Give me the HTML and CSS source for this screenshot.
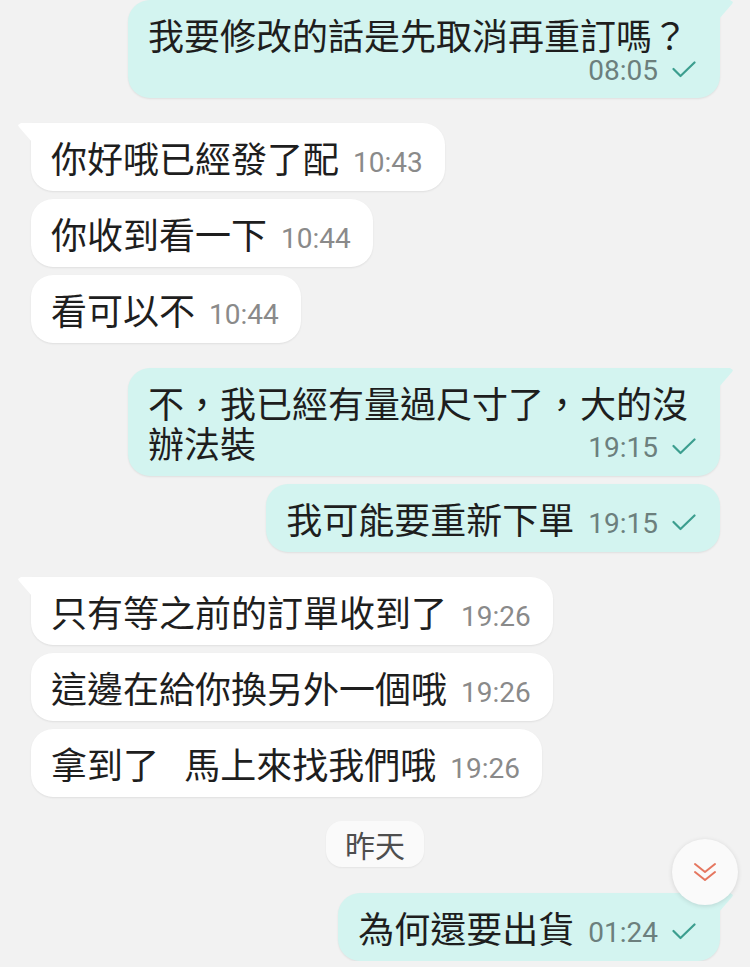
FILE: index.html
```html
<!DOCTYPE html>
<html lang="zh-Hant">
<head>
    <meta charset="UTF-8">
    <meta name="viewport" content="width=device-width, initial-scale=1.0">
    <title>聊天</title>
    <link rel="stylesheet" href="styles.css">
</head>
<body>
    <div class="chat">
        <div class="row out">
            <div class="msg first wide"><span class="text">我要修改的話是先取消再重訂嗎？</span><span class="meta">08:05<svg class="tick" width="24" height="17" viewBox="0 0 24 17"><polyline points="1.5,8 8.5,15 22.5,1.5"/></svg></span></div>
        </div>

        <div class="row in gap">
            <div class="msg first"><span class="text">你好哦已經發了配</span><span class="meta">10:43</span></div>
        </div>
        <div class="row in">
            <div class="msg"><span class="text">你收到看一下</span><span class="meta">10:44</span></div>
        </div>
        <div class="row in">
            <div class="msg"><span class="text">看可以不</span><span class="meta">10:44</span></div>
        </div>

        <div class="row out gap">
            <div class="msg first"><span class="text">不，我已經有量過尺寸了，大的沒辦法裝</span><span class="meta">19:15<svg class="tick" width="24" height="17" viewBox="0 0 24 17"><polyline points="1.5,8 8.5,15 22.5,1.5"/></svg></span></div>
        </div>
        <div class="row out">
            <div class="msg"><span class="text">我可能要重新下單</span><span class="meta">19:15<svg class="tick" width="24" height="17" viewBox="0 0 24 17"><polyline points="1.5,8 8.5,15 22.5,1.5"/></svg></span></div>
        </div>

        <div class="row in gap">
            <div class="msg first"><span class="text">只有等之前的訂單收到了</span><span class="meta">19:26</span></div>
        </div>
        <div class="row in">
            <div class="msg"><span class="text">這邊在給你換另外一個哦</span><span class="meta">19:26</span></div>
        </div>
        <div class="row in">
            <div class="msg"><span class="text">拿到了&ensp;&thinsp;馬上來找我們哦</span><span class="meta">19:26</span></div>
        </div>

        <div class="day">昨天</div>

        <div class="row out last">
            <div class="msg first"><span class="text">為何還要出貨</span><span class="meta">01:24<svg class="tick" width="24" height="17" viewBox="0 0 24 17"><polyline points="1.5,8 8.5,15 22.5,1.5"/></svg></span></div>
            <button class="scroll" aria-label="scroll down">
                <svg width="24" height="20" viewBox="0 0 24 20"><polyline points="2,2 12,10 22,2"/><polyline points="2,10 12,18 22,10"/></svg>
            </button>
        </div>
    </div>
</body>
</html>
```

FILE: styles.css
```css
body {
    margin: 0;
    background-color: #f2f2f2;
    font-family: "Noto Sans CJK TC", "Noto Sans", sans-serif;
    color: #1e1e1e;
}

.chat {
    display: flex;
    flex-direction: column;
}

.row {
    display: flex;
}

.row.out {
    justify-content: flex-end;
    padding-right: 30px;
}

.row.in {
    justify-content: flex-start;
    padding-left: 31px;
}

.row + .row {
    margin-top: 8px;
}

.row.gap {
    margin-top: 25px;
}

.msg {
    position: relative;
    display: flow-root;
    box-sizing: border-box;
    max-width: 592px;
    padding: 14px 24px 14px 20px;
    border-radius: 22px;
    font-size: 36px;
    line-height: 40px;
    box-shadow: 0 1px 2px rgba(0, 0, 0, 0.08);
}

.in .msg {
    background-color: #ffffff;
    padding-right: 22px;
}

.out .msg {
    background-color: #d3f4f0;
}

/* little tail on the first bubble of a group */
.out .msg.first {
    border-top-right-radius: 0;
}

.in .msg.first {
    border-top-left-radius: 0;
}

.msg.first::after {
    content: "";
    position: absolute;
    top: 0;
    width: 14px;
    height: 19px;
    background: inherit;
}

.out .msg.first::after {
    right: -13px;
    clip-path: polygon(0 0, 11px 0, 14px 2px, 13px 4px, 0 100%);
}

.in .msg.first::after {
    left: -13px;
    clip-path: polygon(100% 0, 3px 0, 0 2px, 1px 4px, 100% 100%);
}

.meta {
    float: right;
    margin: 13px 0 0 14px;
    font-family: Roboto, "Liberation Sans", sans-serif;
    font-size: 28px;
    line-height: 26px;
    color: #8a8a8a;
}

.out .meta {
    color: #6c7f7d;
}

.msg.wide .meta {
    margin-top: 4px;
}

.tick {
    margin-left: 14px;
    vertical-align: 2px;
}

.tick polyline {
    fill: none;
    stroke: #3c9e8f;
    stroke-width: 2.2;
    stroke-linecap: round;
    stroke-linejoin: round;
}

.day {
    align-self: center;
    margin: 24px 0 26px;
    padding: 0 19px;
    height: 46px;
    line-height: 46px;
    font-size: 30px;
    color: #4e4e4e;
    background-color: #fafafa;
    border-radius: 16px;
    box-shadow: 0 1px 2px rgba(0, 0, 0, 0.06);
}

.row.last {
    position: relative;
}

.scroll {
    position: absolute;
    right: 12px;
    top: -54px;
    width: 66px;
    height: 66px;
    padding: 0;
    border: none;
    border-radius: 50%;
    background-color: #fafafa;
    box-shadow: 0 1px 5px rgba(0, 0, 0, 0.12);
    display: flex;
    align-items: center;
    justify-content: center;
}

.scroll polyline {
    fill: none;
    stroke: #e5765f;
    stroke-width: 2;
    stroke-linecap: round;
    stroke-linejoin: round;
}
```
